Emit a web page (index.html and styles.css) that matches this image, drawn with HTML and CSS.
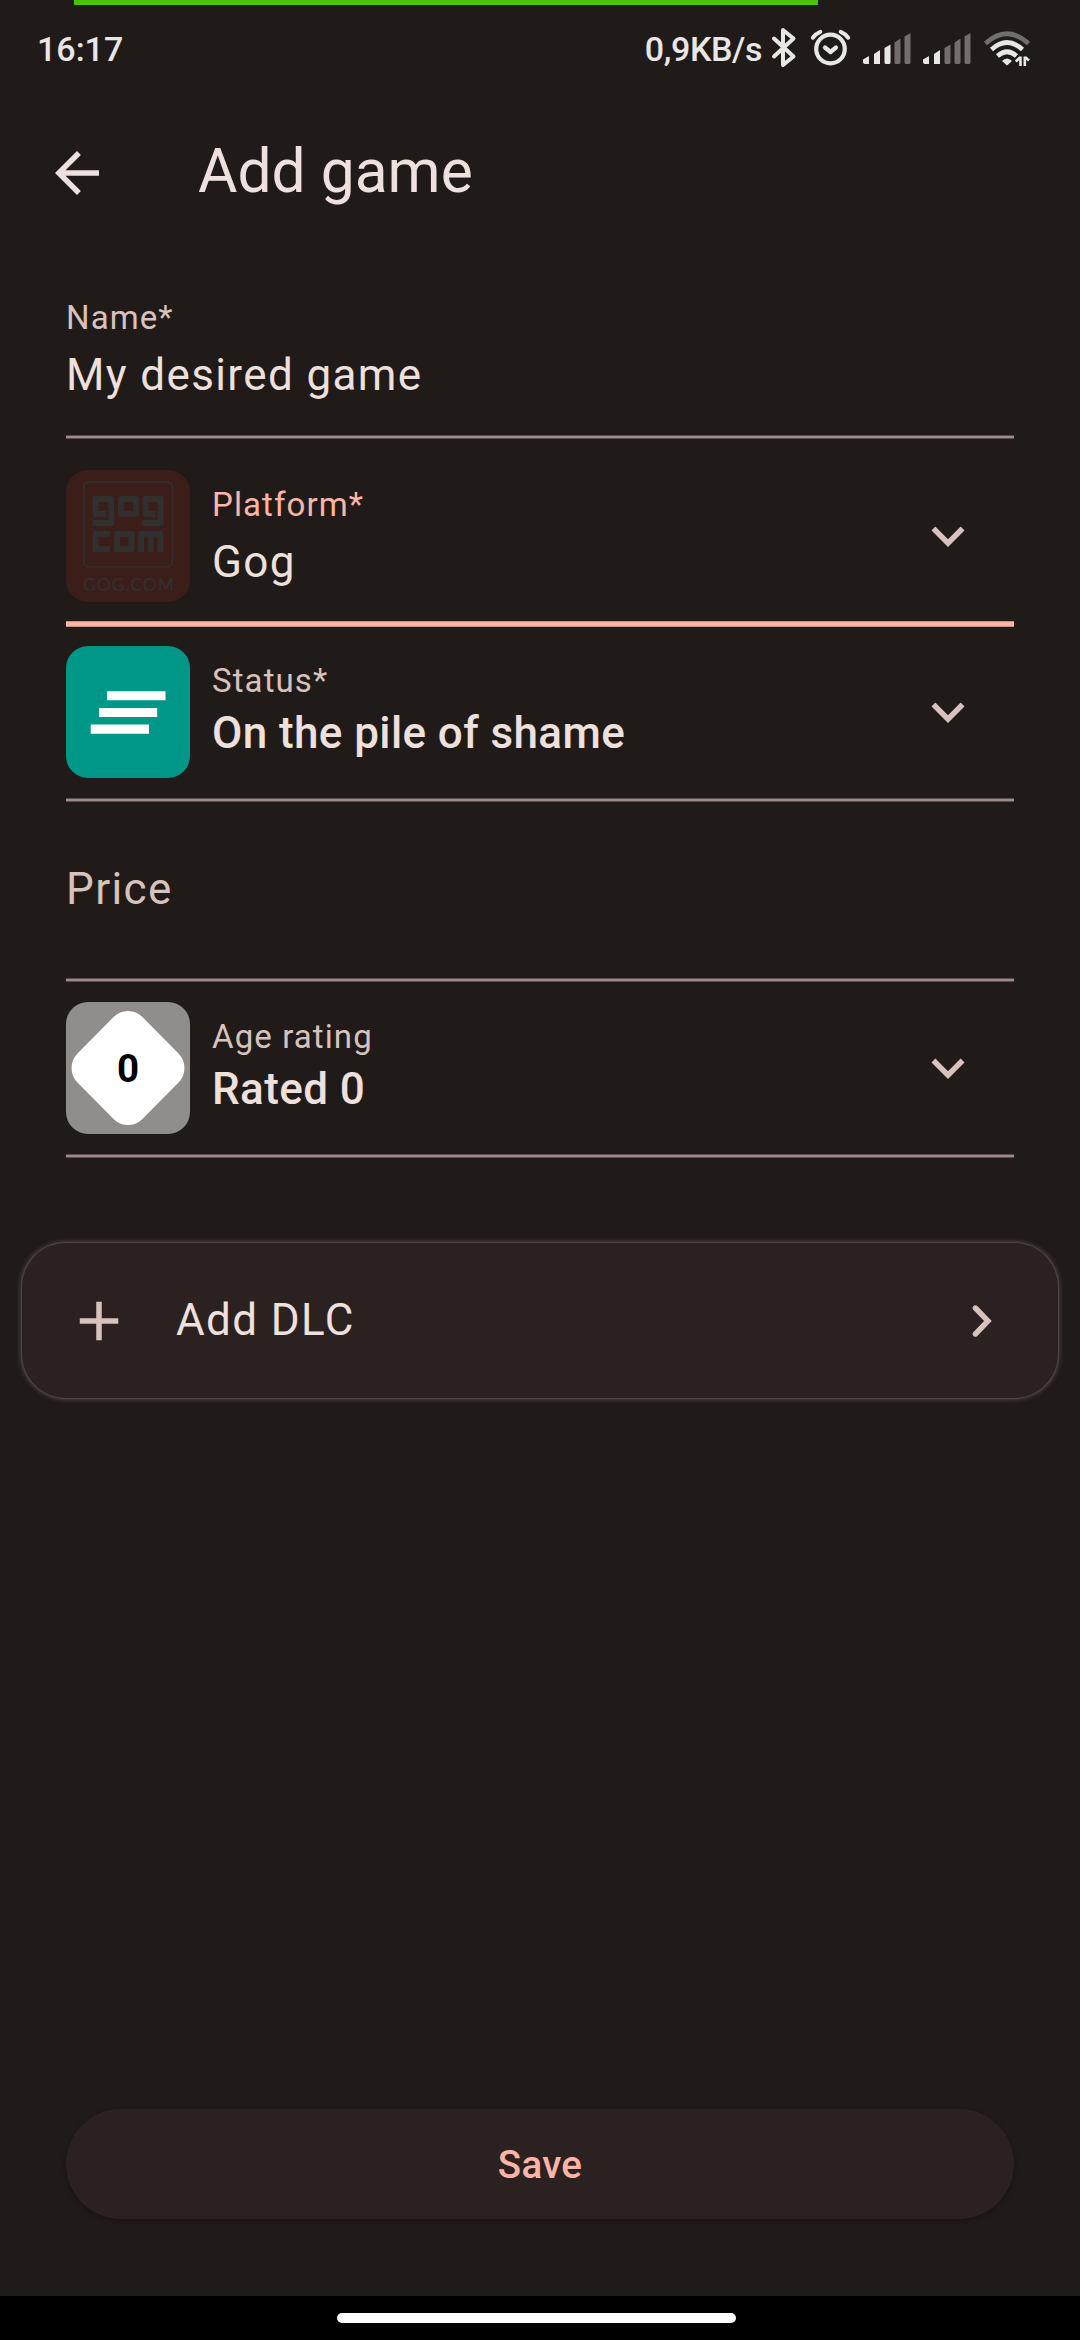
FILE: index.html
```html
<!DOCTYPE html>
<html lang="en">
<head>
<meta charset="utf-8">
<title>Add game</title>
<link rel="stylesheet" href="styles.css">
</head>
<body>
<div class="screen">
  <div class="progress"></div>
  <header class="status">
    <span class="clock">16:17</span>
    <span class="speed">0,9KB/s</span>
    <svg class="tray" width="270" height="48" viewBox="766 24 270 48">
      <path d="M774 38.500L793.500 56.500L783 65V30L793.500 38.500L774 56.500" fill="none" stroke="#e9e7e6" stroke-width="4" stroke-linejoin="round" stroke-linecap="round"/>
      <g fill="none" stroke="#e9e7e6" stroke-width="4.200" stroke-linecap="round" stroke-linejoin="round">
        <circle cx="830.500" cy="49" r="14.300"/>
        <path d="M825 47.500L830.500 52L836 47.500"/>
        <path d="M812.800 37.700Q816 33.500 820.300 31.800M848.200 37.700Q845 33.500 840.700 31.800" stroke-width="4"/>
      </g>
      <g fill="#e9e7e6">
        <path d="M863 62V59.500L869 56V64H865Q863 64 863 62Z"/>
        <path d="M874 64V54L880 50V64Z"/>
        <path d="M884.500 63V48L890.500 44.500V63L889.500 64H885.500Z"/>
        <path d="M894.500 63V42.500L900.500 38.500V63L899.500 64H895.500Z" fill="#736e6c"/>
        <path d="M904.500 63V36.500L910.500 33V63L909.500 64H905.500Z" fill="#736e6c"/>
      </g>
      <g fill="#e9e7e6">
        <path d="M923 62V59.500L929 56V64H925Q923 64 923 62Z"/>
        <path d="M934 64V54L940 50V64Z"/>
        <path d="M944.500 63V48L950.500 44.500V63L949.500 64H945.500Z" fill="#736e6c"/>
        <path d="M954.500 63V42.500L960.500 38.500V63L959.500 64H955.500Z" fill="#736e6c"/>
        <path d="M964.500 63V36.500L970.500 33V63L969.500 64H965.500Z" fill="#736e6c"/>
      </g>
      <g fill="none" stroke="#e9e7e6" stroke-width="4.600">
        <path d="M985.500 43.500Q1007 24 1028.500 43.500" stroke="#736e6c"/>
        <path d="M991.500 49.500Q1007 35.500 1022.500 49.500"/>
        <path d="M997.500 56Q1007 47.500 1016.500 56"/>
        <path d="M1002 61Q1007 56 1012 61L1007 65.500Z" fill="#e9e7e6" stroke="none"/>
        <path d="M1020.500 56.500V66M1015.800 61.500L1020 57.500M1024.800 56.500V66M1029 60.500L1025 57" stroke-width="2.600"/>
      </g>
    </svg>
  </header>

  <div class="appbar">
    <svg width="66" height="66" viewBox="0 0 24 24"><path fill="#ede0dd" d="M20 11H7.830l5.590-5.590L12 4l-8 8 8 8 1.410-1.410L7.830 13H20v-2z"/></svg>
    <h1 class="title">Add game</h1>
  </div>

  <main class="form">
    <section class="field name">
      <div class="texts"><div class="label">Name*</div><div class="value">My desired game</div></div>
    </section>
    <div class="rule"></div>

    <section class="field select platform">
      <svg class="thumb gog" width="124" height="132" viewBox="0 0 124 132">
        <rect x="17.800" y="11.800" width="88.600" height="85" rx="5" fill="none" stroke="#332e2d" stroke-width="1.700"/>
        <g fill="none" stroke="#30302f" stroke-width="5.800" stroke-linejoin="round">
          <path d="M40 44H29.500V29H45.300V53H26.700"/>
          <rect x="54.900" y="29" width="15.200" height="15"/>
          <path d="M89.500 44H79.500V29H94.500V53H76.700"/>
          <path d="M44 63.900H29.500V79.200H44"/>
          <rect x="50.900" y="63.900" width="14.600" height="15.300"/>
          <path d="M75.100 82V63.900H94.500V82M84.800 64V82"/>
        </g>
        <text class="gogtext" x="17" y="120.700" textLength="91" lengthAdjust="spacing">GOG.COM</text>
      </svg>
      <div class="texts"><div class="label accent">Platform*</div><div class="value">Gog</div></div>
      <svg class="chev" width="66" height="66" viewBox="0 0 24 24"><path d="M7.410 8.590L12 13.170l4.590-4.580L18 10l-6 6-6-6z"/></svg>
    </section>
    <div class="rule active"></div>

    <section class="field select state">
      <svg class="thumb teal" width="124" height="132" viewBox="0 0 124 132"><path fill="#fff" d="M41 45.200h58.500v9.100H41zM33 62h58.200v9.100H33zM24.700 78.600H83v9.100H24.700z"/></svg>
      <div class="texts tight"><div class="label">Status*</div><div class="value strong">On the pile of shame</div></div>
      <svg class="chev" width="66" height="66" viewBox="0 0 24 24"><path d="M7.410 8.590L12 13.170l4.590-4.580L18 10l-6 6-6-6z"/></svg>
    </section>
    <div class="rule"></div>

    <section class="field price"><div class="value muted">Price</div></section>
    <div class="rule"></div>

    <section class="field select">
      <svg class="thumb grey" width="124" height="132" viewBox="0 0 124 132">
        <rect x="17" y="21" width="90" height="90" rx="20" fill="#fff" transform="translate(62 66) scale(1.020 1.030) rotate(45) translate(-62 -66)"/>
        <text class="age" x="62" y="80.300" text-anchor="middle">0</text>
      </svg>
      <div class="texts tight"><div class="label">Age rating</div><div class="value strong">Rated 0</div></div>
      <svg class="chev" width="66" height="66" viewBox="0 0 24 24"><path d="M7.410 8.590L12 13.170l4.590-4.580L18 10l-6 6-6-6z"/></svg>
    </section>
    <div class="rule"></div>
  </main>

  <div class="dlc">
    <svg width="66" height="66" viewBox="0 0 24 24"><path fill="#d8c2bd" d="M19 13h-6v6h-2v-6H5v-2h6V5h2v6h6v2z"/></svg>
    <span class="value">Add DLC</span>
    <svg class="next" width="20" height="34" viewBox="0 0 20 34"><path d="M3.400 4L16 17L3.400 30" fill="none" stroke="#d8c2bd" stroke-width="5.400" stroke-linecap="round"/></svg>
  </div>

  <button class="save">Save</button>
  <footer class="nav"><div class="pill"></div></footer>
</div>
</body>
</html>
```
FILE: styles.css
```css
* { box-sizing: border-box; }
body { margin: 0; background: #201a18; font-family: Roboto, "Liberation Sans", sans-serif; }
.screen {
  width: 1080px;
  height: 2340px;
  display: flex;
  flex-direction: column;
  background: #201b18;
  color: #ede0dd;
  overflow: hidden;
}
.progress { width: 744px; height: 5px; margin-left: 74px; background: #4ac400; }
.status {
  height: 91px;
  padding: 19px 44px 0 37px;
  display: flex;
  align-items: flex-start;
  color: #e9e7e6;
  font-size: 34px;
  line-height: 50px;
  font-weight: 500;
}
.speed { margin-left: auto; letter-spacing: -0.4px; }
.tray { margin-left: 4px; }
.appbar { height: 154px; padding-left: 44px; display: flex; align-items: center; }
.title { margin: -3px 0 0 88px; font-size: 60.5px; line-height: 77px; font-weight: 400; }
.form { padding: 0 66px; margin-top: 46px; }
.field { display: flex; }
.name { height: 139px; }
.rule {
  height: 4px;
  background: linear-gradient(#5a4e4a 1px, #9f8c88 1px, #9f8c88 3px, #5a4e4a 3px);
}
.rule.active {
  height: 6px;
  background: linear-gradient(#c99084 1px, #ffb4a5 1px, #ffb4a5 5px, #c99084 5px);
}
.select { padding-top: 20px; height: 172px; }
.platform { padding-top: 31px; height: 182px; }
.state { padding-top: 19px; height: 171px; }
.thumb { border-radius: 22px; flex: none; }
.gog { background: #3b1e1a; }
.teal { background: #009688; }
.grey { background: #918d8b; }
.gogtext { font-family: Lato, sans-serif; font-size: 17.5px; fill: #332e2d; }
.age { font-size: 38.5px; font-weight: 700; fill: #000; }
.texts { display: flex; flex-direction: column; gap: 2px; }
.select .texts { padding: 13px 0 0 22px; flex: 1; }
.label { font-size: 33px; line-height: 44px; letter-spacing: 1.1px; color: #d8c2bd; }
.accent { color: #ffb4a5; }
.value { font-size: 44px; line-height: 66px; letter-spacing: 1.375px; }
.texts.tight { gap: 0; }
.tight .value { margin-top: -3px; }
.strong { font-weight: 500; letter-spacing: 0.4px; }
.muted { color: #d8c2bd; }
.chev { margin: 33px 33px 0 0; fill: #d8c2bd; }
.price { height: 176px; padding-bottom: 3px; align-items: center; }
.dlc {
  margin: 85px 22px 0;
  height: 155px;
  padding: 0 66px 0 44px;
  border-radius: 44px;
  display: flex;
  align-items: center;
  background: #2c2121;
  box-shadow: 0 0 0 1px #4f4443, 0 0 5px 1px #5c4f4d;
}
.dlc .value { margin: -2px auto 0 44px; }
.save {
  width: 948px;
  height: 110px;
  margin: auto 66px 77px;
  padding: 0;
  border: 0;
  border-radius: 55px;
  background: #2c2121;
  color: #ffb4a5;
  font: 500 38.5px/55px Roboto, "Liberation Sans", sans-serif;
  letter-spacing: 0.275px;
  box-shadow: 0 2px 4px rgba(18, 10, 12, 0.5);
}
.nav { height: 44px; padding-top: 17px; background: #000; }
.pill { width: 399px; height: 10px; margin-left: 337px; border-radius: 5px; background: #fff; }
```
